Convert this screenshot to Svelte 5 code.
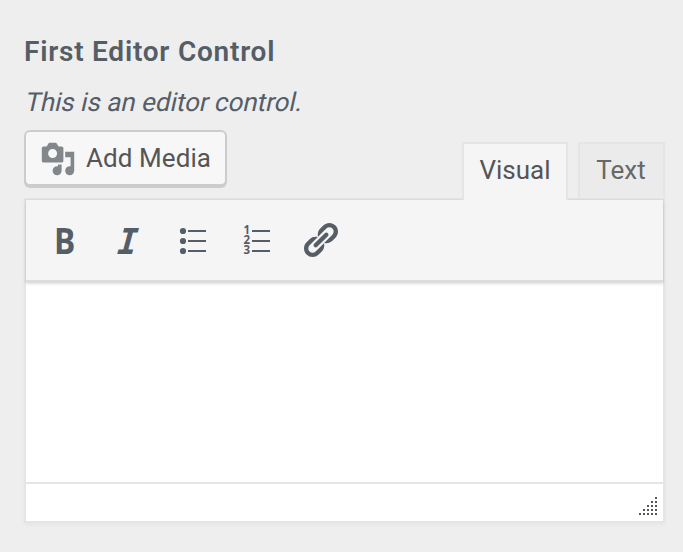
<script>
  let tab = $state('Visual');
  const tabs = ['Visual', 'Text'];
  const rows = [0, 1, 2, 3, 4];
  const lines = [10, 20, 30];
  const grip = rows.flatMap((r) => rows.filter((c) => c >= 4 - r).map((c) => [c * 4, r * 4]));
</script>

<main>
  <h2><span>First Editor Control</span></h2>
  <p class="description"><span>This is an editor control.</span></p>

  <div class="tools">
    <button class="media">
      <svg width="36" height="36" viewBox="0 0 20 20" fill="#82878c">
        <path d="M13 11V4c0-.55-.45-1-1-1h-1.67L9 1H5L3.67 3H2c-.55 0-1 .45-1 1v7c0 .55.45 1 1 1h10c.55 0 1-.45 1-1zM7 4.500c1.380 0 2.500 1.120 2.500 2.500S8.380 9.500 7 9.500 4.500 8.380 4.500 7 5.620 4.500 7 4.500zM14 6h5v10.500c0 1.380-1.120 2.500-2.500 2.500S14 17.880 14 16.500s1.120-2.500 2.500-2.500c.17 0 .34.02.5.05V9h-3V6zm-4 8.050V13h2v3.500c0 1.380-1.120 2.500-2.500 2.500S7 17.880 7 16.500 8.120 14 9.500 14c.17 0 .34.02.5.05z" />
      </svg>
      <span>Add Media</span>
    </button>
    <div class="tabs">
      {#each tabs as name}
        <button class="tab {name.toLowerCase()}" class:active={tab === name} onclick={() => (tab = name)}><span>{name}</span></button>
      {/each}
    </div>
  </div>

  <section class="editor">
    <div class="toolbar">
      <button aria-label="Bold">
        <svg width="40" height="40"><text class="bold" transform="translate(8.9 34) scale(.87 1)">B</text></svg>
      </button>
      <button aria-label="Italic">
        <svg width="40" height="40"><text class="italic" transform="translate(7.8 34) skewX(-5) scale(.95 1)">I</text></svg>
      </button>
      <button aria-label="Bulleted list">
        <svg width="40" height="40">
          {#each lines as y}
            <circle cx="10" cy={y + 1} r="3.100" />
            <rect x="15" {y} width="18" height="2" />
          {/each}
        </svg>
      </button>
      <button aria-label="Numbered list">
        <svg width="40" height="40">
          {#each lines as y, i}
            <text class="digit" x="6.500" y={y + 4.200}>{i + 1}</text>
            <rect x="15" {y} width="18" height="2" />
          {/each}
        </svg>
      </button>
      <button class="link" aria-label="Insert link">
        <svg width="40" height="40" viewBox="0 0 20 20">
          <path d="M17.740 2.760c1.680 1.690 1.680 4.410 0 6.100l-1.530 1.520c-1.120 1.120-2.700 1.470-4.140 1.090l2.620-2.610.76-.77.76-.76c.84-.84.84-2.200 0-3.040-.84-.85-2.200-.85-3.040 0l-.77.76-3.380 3.380c-.37-1.440-.02-3.020 1.100-4.140l1.520-1.530c1.690-1.680 4.420-1.680 6.100 0zM8.590 13.430l5.340-5.340c.42-.42.42-1.100 0-1.520-.44-.43-1.130-.39-1.530 0l-5.330 5.340c-.42.42-.42 1.100 0 1.520.44.43 1.130.39 1.520 0zm-.76 2.290l4.140-4.150c.38 1.440.03 3.020-1.090 4.140l-1.520 1.530c-1.690 1.680-4.410 1.680-6.100 0-1.680-1.680-1.680-4.420 0-6.100l1.530-1.520c1.120-1.120 2.700-1.470 4.140-1.100l-4.140 4.150c-.85.84-.85 2.200 0 3.050.84.84 2.200.84 3.040 0z" />
        </svg>
      </button>
    </div>
    <div class="content"></div>
    <footer>
      <svg width="18" height="18" fill="#50575e">
        {#each grip as [x, y]}<rect {x} {y} width="2" height="2" />{/each}
      </svg>
    </footer>
  </section>
</main>

<style>
  :global(body) { background: #eee; }
  main {
    box-sizing: border-box;
    width: 683px;
    height: 552px;
    padding: 32px 18px 0 24px;
    background: #eee;
    color: #555d66;
    font-family: Roboto, sans-serif;
    font-size: 26px;
  }
  h2 { margin: 0; font-size: 28px; line-height: 40px; font-weight: 600; letter-spacing: .76px; }
  .description { margin: 10px 0 0; line-height: 40px; letter-spacing: -.04px; }
  .description span { display: inline-block; transform: skewX(-12.5deg); transform-origin: 0 73%; }
  .tools { display: flex; justify-content: space-between; margin-top: 8px; height: 68px; }
  button {
    box-sizing: border-box;
    margin: 0;
    padding: 0;
    font: inherit;
    border: 0;
    background: none;
  }
  svg { display: block; overflow: visible; }
  .media {
    display: flex;
    align-items: center;
    gap: 10px;
    width: 203px;
    height: 56px;
    padding-left: 14px;
    border: 2px solid #ccc;
    border-radius: 6px;
    box-shadow: 0 2px 0 #ccc;
    background: #f7f7f7;
    color: #555;
    letter-spacing: .08px;
  }
  .media svg { margin-top: 2px; }
  .tabs { display: flex; gap: 10px; padding-top: 12px; }
  .tab {
    height: 56px;
    padding-bottom: 2px;
    border: 2px solid #e5e5e5;
    border-bottom: 0;
    background: #ebebeb;
    color: #686868;
  }
  .tab.visual { width: 106px; }
  .tab.text { width: 87px; padding-right: 1px; }
  .tab.active { height: 58px; padding-bottom: 4px; background: #f5f5f5; color: #555; position: relative; z-index: 2; }
  .editor {
    box-sizing: border-box;
    width: 641px;
    height: 325px;
    border: 2px solid #e5e5e5;
    background: #fff;
    box-shadow: 0 2px 4px rgba(0, 0, 0, .04);
  }
  .toolbar {
    position: relative;
    box-sizing: border-box;
    display: flex;
    gap: 24px;
    height: 82px;
    padding: 20px 0 0 19px;
    background: #f5f5f5;
    border-bottom: 2px solid #ddd;
    box-shadow: 0 0 0 1px rgba(0, 0, 0, .035), 0 2px 3px rgba(0, 0, 0, .13);
  }
  .toolbar button { width: 40px; height: 40px; fill: #555d66; }
  .toolbar .link { margin-left: -1px; }
  .bold { font: 700 36.400px "Open Sans", sans-serif; }
  .italic { font: italic 700 35.600px "DejaVu Sans Mono", monospace; }
  .digit { font: 700 11.500px "Open Sans", sans-serif; }
  .content { height: 200px; }
  footer {
    display: flex;
    justify-content: flex-end;
    height: 24px;
    padding: 13px 6px 0 0;
    border-top: 2px solid #e5e5e5;
  }
</style>
